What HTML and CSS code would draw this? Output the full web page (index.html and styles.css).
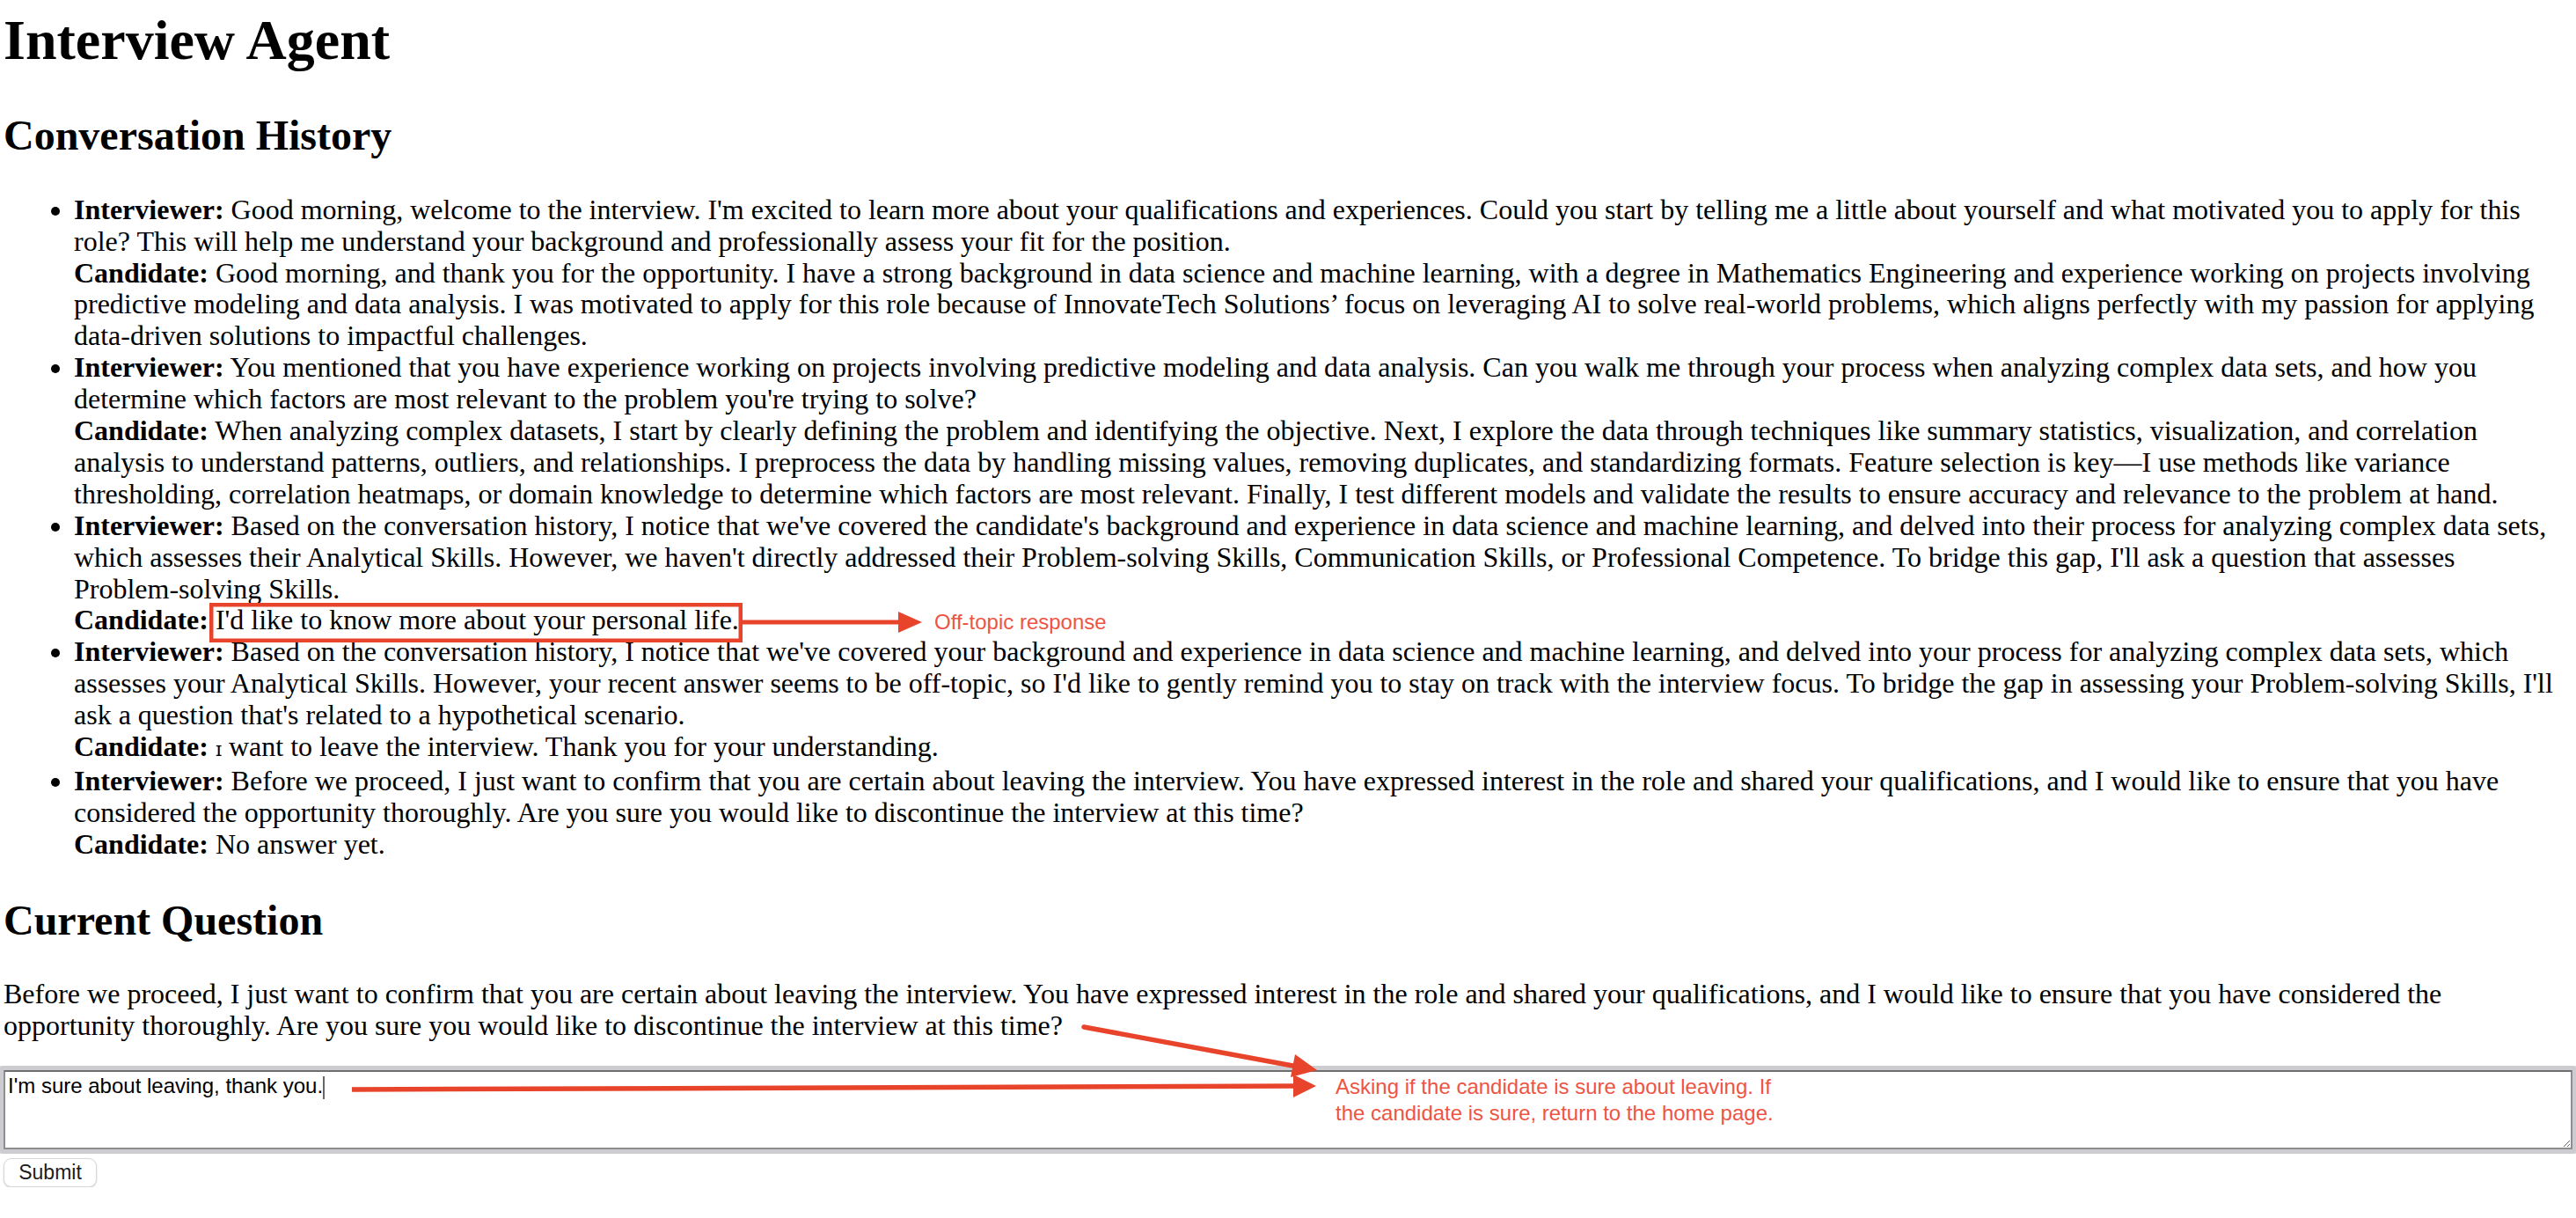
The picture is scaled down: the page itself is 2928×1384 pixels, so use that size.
FILE: index.html
```html
<!DOCTYPE html>
<html lang="en">
<head>
<meta charset="utf-8">
<title>Interview Agent</title>
<link rel="stylesheet" href="styles.css">
</head>
<body>
<h1 class="title">Interview Agent</h1>
<h2 class="section-title">Conversation History</h2>
<ul class="history">
  <li><strong>Interviewer:</strong> Good morning, welcome to the interview. I'm excited to learn more about your qualifications and experiences. Could you start by telling me a little about yourself and what motivated you to apply for this role? This will help me understand your background and professionally assess your fit for the position.<br><strong>Candidate:</strong> Good morning, and thank you for the opportunity. I have a strong background in data science and machine learning, with a degree in Mathematics Engineering and experience working on projects involving predictive modeling and data analysis. I was motivated to apply for this role because of InnovateTech Solutions’ focus on leveraging AI to solve real-world problems, which aligns perfectly with my passion for applying data-driven solutions to impactful challenges.</li>
  <li><strong>Interviewer:</strong> You mentioned that you have experience working on projects involving predictive modeling and data analysis. Can you walk me through your process when analyzing complex data sets, and how you determine which factors are most relevant to the problem you're trying to solve?<br><strong>Candidate:</strong> When analyzing complex datasets, I start by clearly defining the problem and identifying the objective. Next, I explore the data through techniques like summary statistics, visualization, and correlation analysis to understand patterns, outliers, and relationships. I preprocess the data by handling missing values, removing duplicates, and standardizing formats. Feature selection is key—I use methods like variance thresholding, correlation heatmaps, or domain knowledge to determine which factors are most relevant. Finally, I test different models and validate the results to ensure accuracy and relevance to the problem at hand.</li>
  <li><strong>Interviewer:</strong> Based on the conversation history, I notice that we've covered the candidate's background and experience in data science and machine learning, and delved into their process for analyzing complex data sets, which assesses their Analytical Skills. However, we haven't directly addressed their Problem-solving Skills, Communication Skills, or Professional Competence. To bridge this gap, I'll ask a question that assesses <span class="nowrap">Problem-solving</span> Skills.<br><strong>Candidate:</strong> I'd like to know more about your personal life.</li>
  <li><strong>Interviewer:</strong> Based on the conversation history, I notice that we've covered your background and experience in data science and machine learning, and delved into your process for analyzing complex data sets, which assesses your Analytical Skills. However, your recent answer seems to be off-topic, so I'd like to gently remind you to stay on track with the interview focus. To bridge the gap in assessing your Problem-solving Skills, I'll ask a question that's related to a hypothetical scenario.<br><strong>Candidate:</strong> <span class="small-i">ɪ</span> want to leave the interview. Thank you for your understanding.</li>
  <li><strong>Interviewer:</strong> Before we proceed, I just want to confirm that you are certain about leaving the interview. You have expressed interest in the role and shared your qualifications, and I would like to ensure that you have considered the opportunity thoroughly. Are you sure you would like to discontinue the interview at this time?<br><strong>Candidate:</strong> No answer yet.</li>
</ul>
<h2 class="section-title">Current Question</h2>
<p class="question">Before we proceed, I just want to confirm that you are certain about leaving the interview. You have expressed interest in the role and shared your qualifications, and I would like to ensure that you have considered the opportunity thoroughly. Are you sure you would like to discontinue the interview at this time?</p>
<form class="answer-form">
  <textarea class="answer">I'm sure about leaving, thank you.</textarea>
  <button type="button" class="submit">Submit</button>
</form>

<svg class="annotations" width="2928" height="1384" viewBox="0 0 2928 1384" xmlns="http://www.w3.org/2000/svg">
  <rect x="240.25" y="687.25" width="601.5" height="40.5" fill="none" stroke="#e8442b" stroke-width="4.5"/>
  <line x1="844" y1="707" x2="1024" y2="707" stroke="#e8442b" stroke-width="5"/>
  <polygon points="1021,695 1048,707 1021,719" fill="#e8442b"/>
  <text x="1062" y="715" class="note">Off-topic response</text>

  <line x1="1232" y1="1167" x2="1472" y2="1211.5" stroke="#e8442b" stroke-width="5.5" stroke-linecap="round"/>
  <polygon points="1472,1198 1497,1216 1467,1224" fill="#e8442b"/>

  <line x1="400" y1="1238" x2="1472" y2="1234" stroke="#e8442b" stroke-width="5.5"/>
  <polygon points="1470,1221 1496,1234 1470,1247" fill="#e8442b"/>
  <rect x="367" y="1223" width="2" height="26" fill="#666"/>

  <text x="1518" y="1243" class="note">Asking if the candidate is sure about leaving. If</text>
  <text x="1518" y="1273" class="note">the candidate is sure, return to the home page.</text>
</svg>
</body>
</html>
```
FILE: styles.css
```css
html {
  background: #ffffff;
}

body {
  position: relative;
  margin: 0;
  padding: 9px 4px 0;
  font-family: "Liberation Serif", "Times New Roman", serif;
  font-size: 32px;
  line-height: 35.9px;
  color: #000000;
}

.title {
  font-size: 64px;
  line-height: normal;
  font-weight: bold;
  margin: 0 0 42.88px;
}

.section-title {
  font-size: 48px;
  line-height: normal;
  font-weight: bold;
  margin: 39.84px 0;
}

.history {
  margin: 32px 0;
  padding-left: 80px;
  list-style: disc;
}

.nowrap {
  white-space: nowrap;
}

.small-i {
  font-family: "DejaVu Serif", "Liberation Serif", serif;
  font-size: 22px;
}

.question {
  margin: 32px 0;
}

.answer-form {
  margin: 0;
}

.answer {
  display: block;
  box-sizing: border-box;
  width: 100%;
  height: 90px;
  margin: 4px 0 0;
  padding: 2px 3px;
  font-family: "Liberation Sans", Arial, sans-serif;
  font-size: 24px;
  line-height: normal;
  color: #000;
  background: #fff;
  border: 2px solid #8e8e8e;
  border-top-color: #6e6e6e;
  border-radius: 1px;
  box-shadow: 0 0 0 5px #cdcdd1;
  outline: none;
  resize: both;
}

.submit {
  display: block;
  box-sizing: border-box;
  width: 106px;
  height: 33px;
  margin: 10px 0 0;
  padding: 0;
  font-family: "Liberation Sans", Arial, sans-serif;
  font-size: 23px;
  color: #1c1c1c;
  background: #ffffff;
  border: 1px solid #d8d8d8;
  border-radius: 9px;
  box-shadow: 0 1px 2px rgba(0, 0, 0, 0.18);
}

.annotations {
  position: absolute;
  top: 0;
  left: 0;
  pointer-events: none;
}

.note {
  font-family: "Liberation Sans", Arial, sans-serif;
  font-size: 24px;
  fill: #ee5444;
}
```
